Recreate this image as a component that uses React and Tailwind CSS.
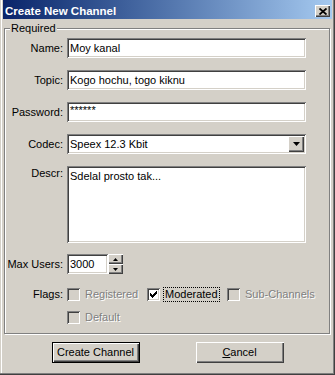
import React from "react";

const sunken =
  "bg-white shadow-[inset_1px_1px_#808080,inset_-1px_-1px_#fff,inset_2px_2px_#404040,inset_-2px_-2px_#d4d0c8]";
const raised =
  "bg-[#d4d0c8] shadow-[inset_1px_1px_#fff,inset_-1px_-1px_#404040,inset_-2px_-2px_#808080]";

function Label({ children, top }) {
  return (
    <span className={`w-[58px] mr-[4px] text-right shrink-0 ${top ? "self-start pt-[1px]" : ""}`}>
      {children}
    </span>
  );
}

function TextRow({ label, value, small }) {
  return (
    <div className="flex items-center h-[20px]">
      <Label>{label}</Label>
      <div className={`${sunken} w-[239px] h-[20px] flex items-center pl-[3px]`}>
        {small ? <span className="text-[11px] leading-[8px] self-start pt-[4px]">{value}</span> : value}
      </div>
    </div>
  );
}

function Check({ checked, disabled, focus, label, width }) {
  return (
    <div className={`flex items-center ${width}`}>
      <div
        className={`w-[13px] h-[13px] shrink-0 flex items-center justify-center shadow-[inset_1px_1px_#808080,inset_-1px_-1px_#fff,inset_2px_2px_#404040,inset_-2px_-2px_#d4d0c8] ${
          disabled ? "bg-[#d4d0c8]" : "bg-white"
        }`}
      >
        {checked && (
          <svg width="7" height="7" viewBox="0 0 7 7">
            <path d="M0 2h1v1h1v1h1v-1h1v-1h1v-1h1v-1h1v3h-1v1h-1v1h-1v1h-1v1h-1v-1h-1v-1h-1z" fill="#000" />
          </svg>
        )}
      </div>
      <span
        className={`ml-[3px] px-[1px] border ${focus ? "border-dotted border-black" : "border-transparent"} ${
          disabled ? "text-[#808080] [text-shadow:1px_1px_0_#fff]" : "text-black"
        }`}
      >
        {label}
      </span>
    </div>
  );
}

function Button({ children, isDefault }) {
  return (
    <div className={`w-[88px] h-[21px] ${isDefault ? "border border-black" : ""}`}>
      <div className={`${raised} w-full h-full flex items-center justify-center`}>{children}</div>
    </div>
  );
}

export default function App() {
  return (
    <div className="w-[335px] h-[375px] bg-[#d4d0c8] font-['Liberation_Sans',Arial,sans-serif] text-[11px] leading-[13px] text-black flex flex-col shadow-[inset_-1px_-1px_#404040,inset_-2px_-2px_#808080,inset_1px_0_#d4d0c8,inset_2px_0_#fff] overflow-hidden">
      {/* title bar */}
      <div className="mx-[3px] h-[19px] shrink-0 bg-linear-to-r from-[#0a246a] to-[#a6caf0] flex items-end justify-between pb-[2px] pl-[2px] pr-[2px]">
        <span className="text-white font-bold text-[11.5px] leading-[12px]">Create New Channel</span>
        <div className={`${raised} w-[15px] h-[12px] flex items-center justify-center`}>
          <svg width="8" height="7" viewBox="0 0 8 7">
            <path d="M0.5 0.5 L7.5 6.5 M7.5 0.5 L0.5 6.5" stroke="#000" strokeWidth="1.8" />
          </svg>
        </div>
      </div>

      {/* group box */}
      <div className="relative ml-[4px] mt-[9px] w-[326px] h-[306px] border border-[#808080] shadow-[inset_1px_1px_#fff,1px_1px_#fff] pt-[9px] flex flex-col">
        <span className="absolute left-[5px] top-[-7px] bg-[#d4d0c8] px-[1px]">Required</span>

        <div className="flex flex-col gap-[12px]">
          <TextRow label="Name:" value="Moy kanal" />
          <TextRow label="Topic:" value="Kogo hochu, togo kiknu" />
          <TextRow label="Password:" value="******" small />

          <div className="flex items-center h-[20px]">
            <Label>Codec:</Label>
            <div className={`${sunken} w-[239px] h-[20px] flex items-center pl-[3px] pr-[2px]`}>
              <span className="flex-1">Speex 12.3 Kbit</span>
              <div className={`${raised} w-[16px] h-[16px] flex items-center justify-center`}>
                <svg width="7" height="4" viewBox="0 0 7 4">
                  <path d="M0 0h7l-3.5 4z" fill="#000" />
                </svg>
              </div>
            </div>
          </div>

          <div className="flex h-[77px]">
            <Label top>Descr:</Label>
            <div className={`${sunken} w-[239px] h-[77px] pl-[3px] pt-[4px]`}>Sdelal prosto tak...</div>
          </div>
        </div>

        <div className="flex items-center h-[20px] mt-[11px]">
          <Label>Max Users:</Label>
          <div className={`${sunken} w-[41px] h-[20px] flex items-center pl-[3px]`}>3000</div>
          <div className="flex flex-col w-[15px] h-[20px]">
            <div className={`${raised} h-[10px] flex items-center justify-center`}>
              <svg width="5" height="3" viewBox="0 0 5 3">
                <path d="M2.5 0L5 3H0z" fill="#000" />
              </svg>
            </div>
            <div className={`${raised} h-[10px] flex items-center justify-center`}>
              <svg width="5" height="3" viewBox="0 0 5 3">
                <path d="M0 0h5L2.5 3z" fill="#000" />
              </svg>
            </div>
          </div>
        </div>

        <div className="flex items-center h-[17px] mt-[12px]">
          <Label>Flags:</Label>
          <Check disabled label="Registered" width="w-[80px]" />
          <Check checked focus label="Moderated" width="w-[80px]" />
          <Check disabled label="Sub-Channels" width="" />
        </div>

        <div className="flex items-center h-[17px] mt-[6px] pl-[62px]">
          <Check disabled label="Default" width="" />
        </div>
      </div>

      {/* buttons */}
      <div className="flex justify-center gap-[56px] mt-[8px]">
        <Button isDefault>Create Channel</Button>
        <Button>
          <span>
            <span className="underline">C</span>ancel
          </span>
        </Button>
      </div>
    </div>
  );
}
